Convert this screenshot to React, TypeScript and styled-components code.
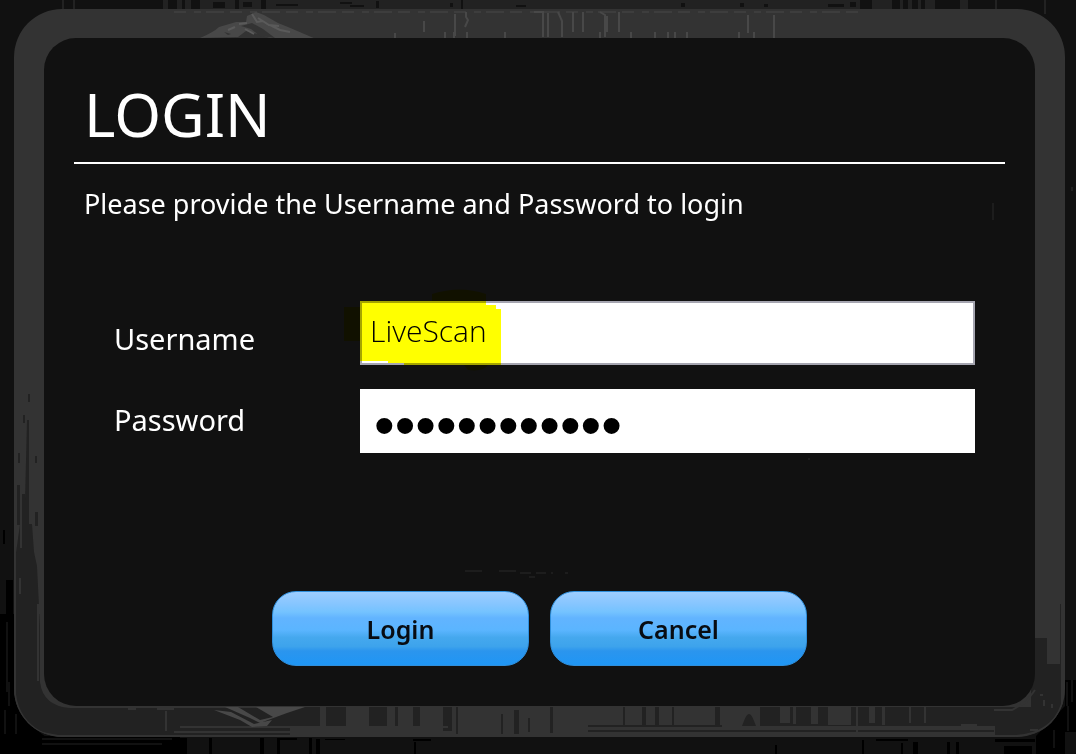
import React from "react";
import styled, { createGlobalStyle } from "styled-components";

const GlobalStyle = createGlobalStyle`
  *, *::before, *::after { box-sizing: border-box; }
  body { margin: 0; background: #111; }
`;

const Page = styled.main`
  position: relative;
  display: flex;
  min-height: 100vh;
  padding: 9px 11px 17px 14px;
  background: #111;
  color: #fff;
  font-family: "Noto Sans", "Open Sans", sans-serif;
`;

const Texture = styled.svg`
  position: absolute;
  inset: 0;
  width: 100%;
  height: 100%;
  pointer-events: none;
`;

const Frame = styled.div`
  position: relative;
  flex: 1;
  display: flex;
  padding: 29px 30px 31px;
  border-radius: 48px;
  background: #333;
  overflow: hidden;
`;

const Panel = styled.section`
  position: relative;
  flex: 1;
  padding: 36px 30px 38px;
  border-radius: 32px;
  background: #111;
`;

const Title = styled.h1`
  margin: 0;
  padding: 0 10px 8px;
  border-bottom: 2px solid #fff;
  font-size: 60px;
  font-weight: 400;
  line-height: 80px;
`;

const Intro = styled.p`
  margin: 20px 0 0;
  padding: 0 10px;
  font-size: 27px;
  line-height: 40px;
`;

const Form = styled.form`
  display: flex;
  flex-direction: column;
  gap: 138px;
  padding: 77px 30px 0 40px;
`;

const Fields = styled.div`
  display: flex;
`;

const Labels = styled.div`
  display: flex;
  flex-direction: column;
  gap: 41px;
  width: 246px;
  padding-top: 18px;
`;

const Label = styled.label`
  font-size: 29px;
  line-height: 40px;
`;

const Inputs = styled.div`
  flex: 1;
  display: flex;
  flex-direction: column;
  gap: 24px;
`;

const InputWrap = styled.div`
  position: relative;
  display: flex;
`;

const Input = styled.input<{ $secret?: boolean }>`
  width: 100%;
  height: 64px;
  border: ${(p) => (p.$secret ? "0" : "2px solid #a5a5b0")};
  border-radius: 0;
  outline: 0;
  background: #fff;
  color: #000;
  padding: ${(p) => (p.$secret ? "10px 14px 0" : "0 8px 6px")};
  font-family: ${(p) => (p.$secret ? '"Liberation Sans", sans-serif' : '"Open Sans", sans-serif')};
  font-size: ${(p) => (p.$secret ? "59px" : "30px")};
  line-height: ${(p) => (p.$secret ? "54px" : "40px")};
  font-weight: ${(p) => (p.$secret ? 400 : 300)};
`;

const Marker = styled.svg`
  position: absolute;
  left: -16px;
  top: -12px;
  width: 160px;
  height: 84px;
  mix-blend-mode: multiply;
  pointer-events: none;
`;

const Actions = styled.div`
  display: flex;
  justify-content: center;
  gap: 21px;
  padding-right: 10px;
`;

const Button = styled.button`
  width: 257px;
  height: 75px;
  padding: 0;
  border: 1px solid #2f8fdc;
  border-radius: 24px;
  background: linear-gradient(#9fceff 0%, #85c5ff 18%, #74c3ff 28%, #62b4ff 36%, #5bb5ff 52%, #45a8ee 62%, #3da3ec 74%, #2b95ee 80%, #1e96f5 100%) border-box;
  color: #080c12;
  font-family: "Noto Sans", sans-serif;
  font-size: 25px;
  font-weight: 600;
`;

function Backdrop() {
  return (
    <Texture viewBox="0 0 1076 754" preserveAspectRatio="none" aria-hidden="true">
      <path fill="#222" d="M160 0H860V9H160zM872 0h20v9h-20zM900 0h3v9h-3zM908 0h4v9h-4zM918 0h3v9h-3zM925 0h10v9h-10zM960 0h8v9h-8zM995 0h2v9h-2zM1044 0h2v14h-2zM62 0h2v9h-2zM73 0h2v9h-2z" />
      <path fill="#111" d="M160 0h3v9h-3zM168 0h9v9h-9zM182 0h3v9h-3zM191 0h9v9h-9zM213 2h12v6h-12zM235 0h4v9h-4zM243 2h9v5h-9zM261 0h5v9h-5zM276 4h22v2h-22zM340 2h12v2h-12zM350 5h14v2h-14zM376 1h3v7h-3zM450 3h3v4h-3zM461 0h2v9h-2zM516 5h10v2h-10zM681 3h4v4h-4zM740 3h4v4h-4zM764 4h4v3h-4zM828 4h16v3h-16zM850 2h6v5h-6z" />
      <path fill="#000" d="M0 614H6V580h7v34h2V690Q18 718 46 737H0zM3 530h2v14H3zM0 736H180v18H0zM180 738h7v16h-7zM209 738h3v16h-3zM260 738h4v16h-4zM277 738h20v2h-17v14h-3zM309 738h3v16h-3zM316 739h4v15h-4zM325 739h20v1h-20zM413 739h18v2h-18zM414 742h2v12h-2zM775 745h2v9h-2zM862 740h2v14h-2zM876 739h32v2h-32zM901 743h2v11h-2zM913 742h5v12h-5zM947 742h3v12h-3zM956 742h3v12h-3zM995 739h40v3h-40zM1004 746h28v8h-28zM1036 736L1065 706V754h-29zM1065 680h11v52h-11z" />
      <path fill="none" stroke="#111" strokeWidth="2" d="M7 622v70M9 682v24M5 710v24M16 714v20M42 739h130M42 744h120M1067 682v24M1072 680v22M1054 730v18M1068 706v25" />
      <path fill="none" stroke="#333" d="M1072 187v4" />
    </Texture>
  );
}

function FrameTexture() {
  return (
    <Texture viewBox="14 9 1051 728" preserveAspectRatio="none" aria-hidden="true">
      <path fill="#222" d="M20 524h12l2 28 3 14 3 60v56q3 24 30 26H290v29H70Q20 735 15 694V560zM27 420h2v120h-5zM17 485h3v40h-3zM22 494h3v35h-3zM35 512h3v14h-3zM18 453h2v10h-2zM23 415h2v8h-2zM28 394h2v8h-2zM35 456h2v7h-2z" />
      <path fill="#222" d="M1035 707h-4V664h4v-26h12v26h13v-60h3v92q-4 36-38 39h-30v-9H760v-19h275zM290 707h56v19h-56zM369 707h18v19h-18zM395 707h3v19h-3zM413 707h7v19h-7zM443 707h9v24h-9zM456 707h2v27h-2zM501 714h2v20h-2zM514 710h5v24h-5zM528 718h2v14h-2zM550 707h3v26h-3zM623 707h2v19h-2zM642 707h4v19h-4zM655 707h4v19h-4zM672 707h2v19h-2zM715 707h5v19h-5zM744 721q5-14 10 0l2 5h-14z" />
      <path fill="none" stroke="#222" strokeWidth="2" d="M174 727H448M174 732H448M588 726h134M588 731H994" />
      <path fill="#333" d="M780 707h10v16h-10zM793 707h3v17h-3zM811 707h7v17h-7zM828 707h23v18h-23zM856 707h2v27h-2zM869 707h6v16h-6zM882 707h3v18h-3zM909 707h2v16h-2zM924 707h2v16h-2zM320 707h6v19h-6zM165 711h2v20h-2zM157 708h17v2h-17zM128 708h8v2h-8zM19 578h2v16h-2zM37 604h5v10h-3v67h-2zM20 524h2v24h-2zM961 724h16v2h-16z" />
      <path fill="none" stroke="#333" strokeWidth="2" d="M15 350V694Q18 720 42 733L58 736H1015Q1052 734 1062 704V500M43 350V684M994 710h18l14-8 9-12M180 727H448M174 732H448M760 728H994M1044 700v6M1052 704v4M1030 730h8M1040 695h3" />
      <path fill="#484848" d="M200 38Q214 32 219 27L236 22H246L247 16 256 12 264 15 278 23 288 27 302 33 316 39H273L258 34 246 31 238 37z" />
      <path fill="#333" d="M241 26l10 3 9 7 15 2-12-9-11-6zM224 32l7 2-3 1z" />
      <path fill="none" stroke="#5a5a5a" strokeWidth="2" d="M252 14l5 8 6-1M258 18l11 7 10 1M270 25l10 5 10 2M228 30l7-3M239 24l8-1M245 29l9 5" />
      <path fill="#484848" d="M211 707H225L250 718 260 723 268 720 287 713 305 707H268L276 713 286 707H256L273 717 260 720 238 707zM214 710L240 720 252 727 267 726 272 720 254 724 231 712z" />
      <path fill="none" stroke="#484848" strokeWidth="1" strokeDasharray="12 8 7 5 18 6" d="M174 12H858" />
      <path fill="none" stroke="#484848" strokeWidth="2" d="M424 21v11M455 14v22M466 12v5l2 3-3 7M534 12h9v25M548 13v24M558 12l4 9v16M573 12v20M583 12v20M600 12l5 3v22M619 12v20M607 16v16M619 13v18M748 15v18M774 15v23M395 33v5M445 32v6M454 32v6M467 32v6M505 32v6M600 32v6M631 32v6M655 32v6M668 32v6M675 32v6M687 32v6M739 32v6M754 32v6" />
    </Texture>
  );
}

function PanelTexture() {
  return (
    <Texture viewBox="44 38 991 668" preserveAspectRatio="none" aria-hidden="true">
      <path fill="none" stroke="#2a2a2a" strokeWidth="1" d="M993 203v17M465 571h17M499 571h17M520 573h11M536 573h10M529 577h6M551 573h2M565 573h3M808 459h2" />
    </Texture>
  );
}

export default function App() {
  return (
    <>
      <GlobalStyle />
      <Page>
        <Backdrop />
        <Frame>
          <FrameTexture />
          <Panel>
            <PanelTexture />
            <Title>LOGIN</Title>
            <Intro>Please provide the Username and Password to login</Intro>
            <Form onSubmit={(e) => e.preventDefault()}>
              <Fields>
                <Labels>
                  <Label htmlFor="username">Username</Label>
                  <Label htmlFor="password">Password</Label>
                </Labels>
                <Inputs>
                  <InputWrap>
                    <Input id="username" type="text" defaultValue="LiveScan" />
                    <Marker viewBox="-16 -12 160 84" aria-hidden="true">
                      <path fill="#ff0" d="M0 0H72V-7Q100 -16 126 -7V4H136V8H141V64H128Q124 71 108 69L104 64H44V62H28V60H0V40H-16V6H0z" />
                    </Marker>
                  </InputWrap>
                  <InputWrap>
                    <Input id="password" type="password" defaultValue="abcdefghijkl" $secret />
                  </InputWrap>
                </Inputs>
              </Fields>
              <Actions>
                <Button type="submit">Login</Button>
                <Button type="button">Cancel</Button>
              </Actions>
            </Form>
          </Panel>
        </Frame>
      </Page>
    </>
  );
}
